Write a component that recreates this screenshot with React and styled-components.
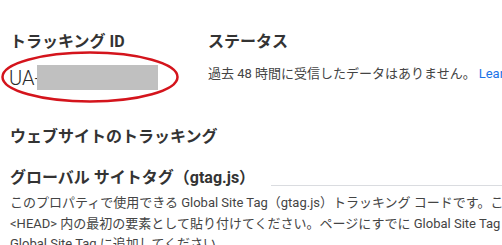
import React from 'react';
import styled, { createGlobalStyle } from 'styled-components';

const GlobalStyle = createGlobalStyle`
  body {
    margin: 0;
    background: #fff;
    font-family: Roboto, "Noto Sans CJK JP", sans-serif;
    color: #333;
  }
`;

const Page = styled.div`
  width: 502px;
  height: 245px;
  overflow: hidden;
  padding: 30px 0 0 10px;
  box-sizing: border-box;
`;

const TopRow = styled.div`
  display: flex;
`;

const Column = styled.div`
  width: ${(p) => p.width || 'auto'};
  flex-shrink: 0;
  position: relative;
`;

const Heading = styled.div`
  font-size: 16px;
  font-weight: 700;
  line-height: 24px;
  color: #333;
  white-space: nowrap;
`;

const IdRow = styled.div`
  display: flex;
  align-items: center;
  margin-top: 11px;
  height: 25px;
`;

const IdText = styled.span`
  font-size: 20px;
  font-weight: 300;
  color: #2a2a2a;
  margin-left: -1px;
`;

const Redacted = styled.span`
  display: inline-block;
  width: 121px;
  height: 25px;
  background: #c0c0c0;
  margin-left: -3px;
`;

const Ellipse = styled.svg`
  position: absolute;
  left: -8px;
  top: 22px;
  overflow: visible;
`;

const StatusText = styled.div`
  margin-top: 11px;
  font-size: 13px;
  line-height: 18px;
  color: #444;
  white-space: nowrap;
`;

const Link = styled.span`
  color: #1a73e8;
  margin-left: 3px;
`;

const Section = styled.div`
  margin-top: ${(p) => p.gap || 0}px;
`;

const TitleRow = styled.div`
  display: flex;
  align-items: center;
  gap: 16px;
`;

const Rule = styled.div`
  flex: 1;
  height: 1px;
  background: #dadce0;
  margin-top: 14px;
`;

const Paragraph = styled.p`
  margin: 3px 0 0;
  font-size: 13px;
  line-height: 20.5px;
  color: #444;
  white-space: nowrap;
`;

export default function App() {
  return (
    <>
      <GlobalStyle />
      <Page>
        <TopRow>
          <Column width="198px">
            <Heading>トラッキング ID</Heading>
            <IdRow>
              <IdText>UA-</IdText>
              <Redacted />
            </IdRow>
            <Ellipse width="176" height="50" viewBox="0 0 176 50">
              <ellipse cx="88" cy="25" rx="87.5" ry="24.5" fill="none" stroke="#d4141c" strokeWidth="2.5" />
            </Ellipse>
          </Column>
          <Column>
            <Heading>ステータス</Heading>
            <StatusText>
              過去 48 時間に受信したデータはありません。<Link>Learn more</Link>
            </StatusText>
          </Column>
        </TopRow>
        <Section gap={35}>
          <Heading>ウェブサイトのトラッキング</Heading>
        </Section>
        <Section gap={17}>
          <TitleRow>
            <Heading>グローバル サイトタグ（gtag.js）</Heading>
            <Rule />
          </TitleRow>
          <Paragraph>
            このプロパティで使用できる Global Site Tag（gtag.js）トラッキング コードです。このコードをコピーして、トラッキングするすべてのウェブページの
            <br />
            &lt;HEAD&gt; 内の最初の要素として貼り付けてください。ページにすでに Global Site Tag が実装されている場合は、config 行のみを既存の
            <br />
            Global Site Tag に追加してください。
          </Paragraph>
        </Section>
      </Page>
    </>
  );
}
